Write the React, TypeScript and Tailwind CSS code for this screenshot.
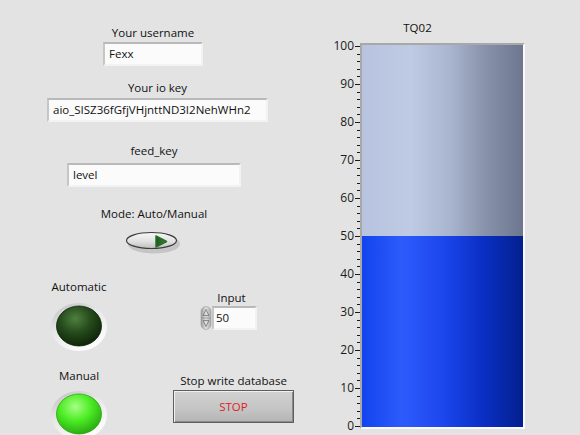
import React from "react";

const font = { fontFamily: '"Open Sans", "Noto Sans", sans-serif' };

function TextBox({ value, w }: { value: string; w: string }) {
  return (
    <div
      className={`${w} h-[24px] bg-[#fbfbfb] border-2 border-t-[#b9b9b9] border-l-[#c6c6c6] border-b-[#f2f2f2] border-r-[#f2f2f2] flex items-center pl-[4px] text-[11.5px] text-[#111] leading-none`}
    >
      {value}
    </div>
  );
}

function Toggle() {
  return (
    <svg width="58" height="24" viewBox="0 0 58 24">
      <defs>
        <linearGradient id="tg" x1="0" y1="0" x2="0" y2="1">
          <stop offset="0" stopColor="#f7f7f7" />
          <stop offset="0.55" stopColor="#e2e2e2" />
          <stop offset="1" stopColor="#bdbdbd" />
        </linearGradient>
        <linearGradient id="tri" x1="0" y1="0" x2="1" y2="0">
          <stop offset="0" stopColor="#1d551d" />
          <stop offset="1" stopColor="#358a33" />
        </linearGradient>
      </defs>
      <ellipse cx="30" cy="14" rx="26" ry="9.5" fill="#b8b8b8" opacity="0.7" />
      <ellipse cx="27.5" cy="10.5" rx="25" ry="8" fill="url(#tg)" stroke="#3c3c3c" strokeWidth="1.2" />
      <path d="M32 6 L42.5 11.5 L32 17 Z" fill="url(#tri)" stroke="#2a6e28" strokeWidth="1.5" strokeLinejoin="round" />
    </svg>
  );
}

function Led({ on, id }: { on: boolean; id: string }) {
  const c = on
    ? { hi: "#a6ff84", mid: "#4cec24", edge: "#2aa812" }
    : { hi: "#4f803e", mid: "#254a1c", edge: "#0e2408" };
  return (
    <svg width="58" height="50" viewBox="0 0 58 50">
      <defs>
        <linearGradient id={`ring${id}`} x1="0" y1="0" x2="0.6" y2="1">
          <stop offset="0" stopColor="#bdbdbd" />
          <stop offset="0.45" stopColor="#e6e6e6" />
          <stop offset="1" stopColor="#fdfdfd" />
        </linearGradient>
        <radialGradient id={`led${id}`} cx="0.42" cy="0.32" r="0.7">
          <stop offset="0" stopColor={c.hi} />
          <stop offset="0.5" stopColor={c.mid} />
          <stop offset="1" stopColor={c.edge} />
        </radialGradient>
      </defs>
      <ellipse cx="29" cy="25" rx="28" ry="24" fill={`url(#ring${id})`} />
      <ellipse cx="29" cy="24" rx="22.5" ry="20" fill={`url(#led${id})`} stroke={c.edge} strokeWidth="0.8" />
    </svg>
  );
}

function Spinner() {
  return (
    <svg width="12" height="24" viewBox="0 0 12 24">
      <defs>
        <linearGradient id="sp" x1="0" y1="0" x2="1" y2="0">
          <stop offset="0" stopColor="#9a9a9a" />
          <stop offset="0.5" stopColor="#e0e0e0" />
          <stop offset="1" stopColor="#a8a8a8" />
        </linearGradient>
      </defs>
      <rect x="1" y="0.5" width="10" height="23" rx="5" fill="url(#sp)" stroke="#9c9c9c" strokeWidth="0.6" />
      <line x1="1.5" y1="12" x2="10.5" y2="12" stroke="#8a8a8a" strokeWidth="0.7" />
      <path d="M6 3.5 L9 9.5 L3 9.5 Z" fill="none" stroke="#777" strokeWidth="0.8" />
      <path d="M6 20.5 L9 14.5 L3 14.5 Z" fill="none" stroke="#777" strokeWidth="0.8" />
    </svg>
  );
}

function Tank() {
  const ticks: number[] = [];
  for (let v = 0; v <= 100; v += 2) ticks.push(v);
  const yOf = (v: number) => 390 - 3.8 * v;
  return (
    <div className="flex">
      <div className="relative w-[40px] h-[393px]">
        <svg className="absolute left-0 top-0" width="40" height="393">
          {ticks.map((v) => (
            <line
              key={v}
              x1={v % 10 === 0 ? 35 : 37}
              x2={40}
              y1={Math.round(yOf(v)) + 0.5}
              y2={Math.round(yOf(v)) + 0.5}
              stroke="#1a1a1a"
              strokeWidth="1"
            />
          ))}
        </svg>
        {[0, 10, 20, 30, 40, 50, 60, 70, 80, 90, 100].map((v) => (
          <span
            key={v}
            className="absolute right-[6px] text-[12px] leading-[14px] text-[#1a1a1a]"
            style={{ top: yOf(v) - 7 }}
          >
            {v}
          </span>
        ))}
      </div>
      <div className="mt-[7px] w-[165px] h-[386px] border-2 border-t-[#a8a8a8] border-l-[#a8a8a8] border-b-[#fafafa] border-r-[#fafafa] flex flex-col">
        <div className="flex-1 bg-[linear-gradient(90deg,#b8c3df_0%,#bfcae5_30%,#a9b4ce_55%,#8a94ad_75%,#6d768f_100%)]" />
        <div className="h-[191px] bg-[linear-gradient(90deg,#1244ee_0%,#2d5bfb_25%,#1c47ee_50%,#0a2fc4_75%,#03208e_100%)]" />
      </div>
    </div>
  );
}

export default function App() {
  return (
    <div className="w-[580px] h-[435px] bg-[#e3e3e3] flex overflow-hidden text-[#111]" style={font}>
      <div className="w-[320px] flex flex-col text-[11.5px] leading-4">
        <div className="mt-[25px] ml-[103px] w-[100px] flex flex-col items-center">
          <div>Your username</div>
          <div className="mt-[1px] self-stretch">
            <TextBox value="Fexx" w="w-[100px]" />
          </div>
        </div>
        <div className="mt-[14px] ml-[47px] w-[221px] flex flex-col items-center">
          <div>Your io key</div>
          <div className="mt-[2px] self-stretch">
            <TextBox value="aio_SISZ36fGfjVHjnttND3I2NehWHn2" w="w-[221px]" />
          </div>
        </div>
        <div className="mt-[21px] ml-[67px] w-[174px] flex flex-col items-center">
          <div>feed_key</div>
          <div className="mt-[4px] self-stretch">
            <TextBox value="level" w="w-[174px]" />
          </div>
        </div>
        <div className="mt-[19px] ml-[100px] w-[108px] flex flex-col items-center">
          <div className="whitespace-nowrap">Mode: Auto/Manual</div>
          <div className="mt-[8px] -ml-[2px] h-[23px]">
            <Toggle />
          </div>
        </div>
        <div className="flex items-start h-[97px]">
          <div className="ml-[50px] w-[58px] mt-[26px] flex flex-col items-center">
            <div>Automatic</div>
            <div className="mt-[7px]">
              <Led on={false} id="a" />
            </div>
          </div>
          <div className="ml-[92px] w-[57px] mt-[37px] flex flex-col items-center">
            <div className="ml-[6px]">Input</div>
            <div className="flex self-stretch">
              <Spinner />
              <div className="w-[45px] h-[24px] bg-[#fbfbfb] border-2 border-t-[#b9b9b9] border-l-[#c6c6c6] border-b-[#f2f2f2] border-r-[#f2f2f2] flex items-center pl-[2px] text-[11.5px] leading-none">
                50
              </div>
            </div>
          </div>
        </div>
        <div className="flex items-start">
          <div className="ml-[50px] w-[58px] mt-[18px] flex flex-col items-center">
            <div>Manual</div>
            <div className="mt-[6px]">
              <Led on={true} id="m" />
            </div>
          </div>
          <div className="ml-[65px] w-[121px] mt-[23px] flex flex-col items-center">
            <div className="whitespace-nowrap">Stop write database</div>
            <div className="mt-[1px] w-[121px] h-[33px] border border-[#5e5e5e] bg-[linear-gradient(180deg,#d2d2d2_0%,#c4c4c4_60%,#b4b4b4_100%)] shadow-[inset_1px_1px_0_#f0f0f0,inset_-1px_-1px_0_#8a8a8a] flex items-center justify-center text-[#e01c1c] text-[11.5px]">
              STOP
            </div>
          </div>
        </div>
      </div>
      <div className="flex flex-col">
        <div className="mt-[20px] h-[16px] w-[205px] text-center text-[11.5px] leading-4 -ml-[5px]">TQ02</div>
        <Tank />
      </div>
    </div>
  );
}
